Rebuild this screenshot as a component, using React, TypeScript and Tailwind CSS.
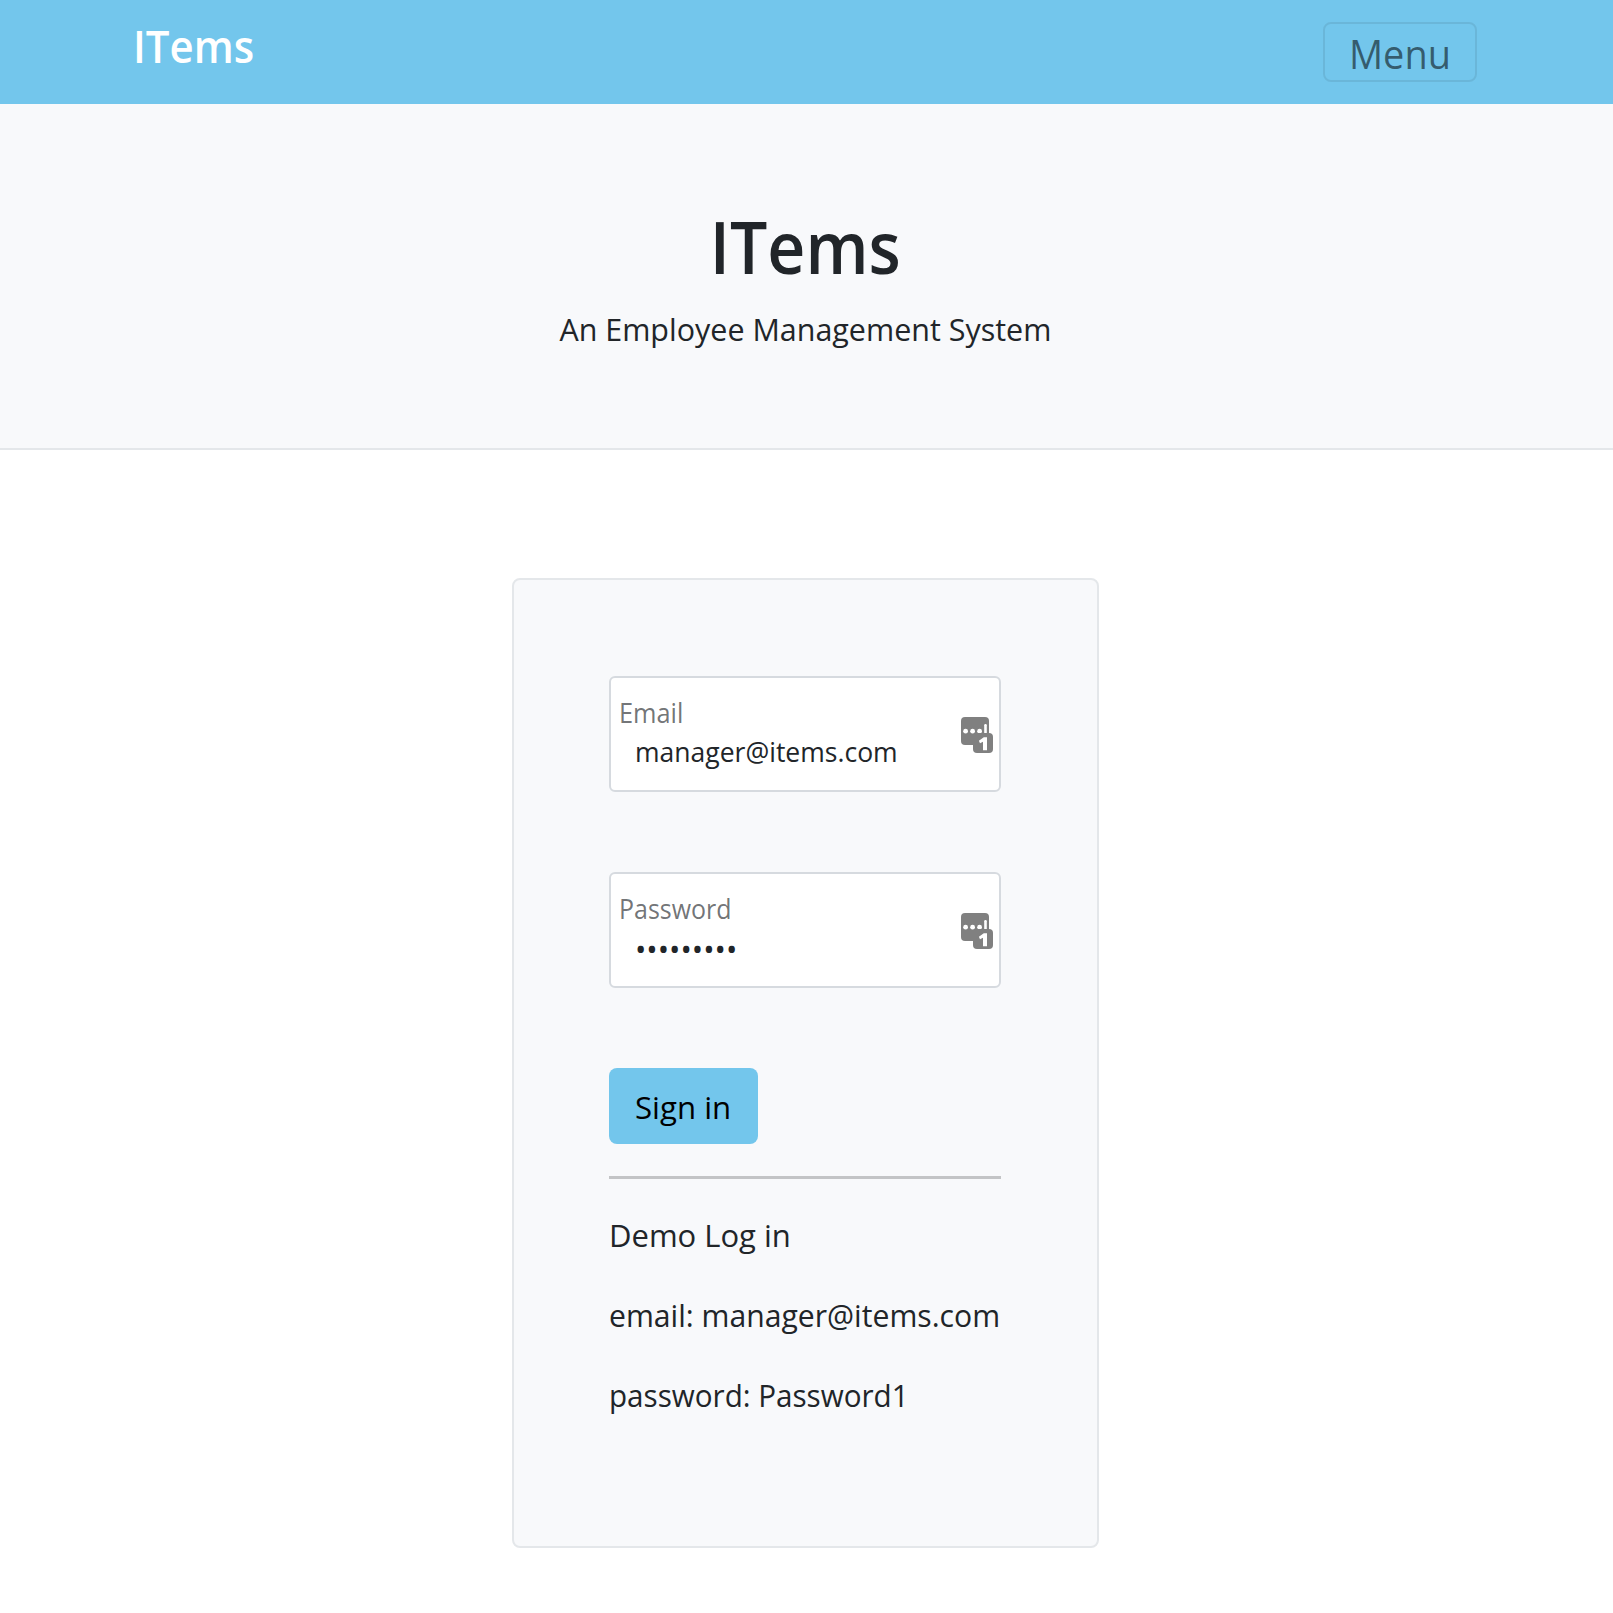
function VaultIcon() {
  return (
    <svg viewBox="0 0 32 36" className="absolute right-[6px] top-[39px] h-9 w-8" aria-hidden="true">
      <rect x="0" y="0" width="28" height="28" rx="4" fill="#808080" />
      <circle cx="4.6" cy="14.2" r="2.4" fill="#fff" />
      <circle cx="11.6" cy="14.2" r="2.4" fill="#fff" />
      <circle cx="18.6" cy="14.2" r="2.4" fill="#fff" />
      <rect x="23.2" y="7" width="2.6" height="12" rx="1.2" fill="#fff" />
      <rect x="12" y="16" width="20" height="20" rx="4" fill="#808080" />
      <path d="M22.8 20.2h3.2v13h-4v-8.4l-3 1.5-1.1-2.6z" fill="#fff" />
    </svg>
  );
}

export default function App() {
  return (
    <div className="min-h-[1613px] bg-white font-['Open_Sans',sans-serif] text-[31.5px] text-[#212529]">
      <nav className="flex h-[104px] items-start justify-between bg-[#73c6ec] pl-[133px] pr-[136px]">
        <a className="mt-4 origin-left scale-x-[0.932] text-[45px] font-semibold leading-[60px] text-white">ITems</a>
        <button className="mt-[22px] h-[60px] w-[154px] rounded-lg border-2 border-black/8 pl-[24px] pt-[2px] text-left text-[39.5px] leading-[57px] text-black/55">
          <span className="inline-block origin-left scale-x-[0.96]">Menu</span>
        </button>
      </nav>

      <header className="flex h-[346px] flex-col items-center border-b-2 border-[#e4e7ea] bg-[#f8f9fb] pt-[104px]">
        <h1 className="mr-[3px] h-[78px] scale-x-[0.925] text-[71.5px] font-semibold leading-[78px]">ITems</h1>
        <p className="mr-[2px] mt-[19px] scale-x-[0.967] leading-[48px]">An Employee Management System</p>
      </header>

      <main className="pl-[512px] pt-[128px]">
        <section className="h-[970px] w-[587px] rounded-lg border-2 border-[#e4e7ea] bg-[#f8f9fb] px-[95px] pt-24">
          <div className="relative h-[116px] w-[392px] rounded-md border-2 border-[#d6dadf] bg-white pl-[8px] pt-[15px]">
            <label className="block h-[40px] origin-left scale-x-[0.948] text-[26.7px] leading-[40px] text-[#212529]/65">Email</label>
            <input
              readOnly
              value="manager@items.com"
              className="-mt-px ml-4 block h-[38px] w-[310px] origin-left scale-x-[0.958] text-[27.7px] leading-[38px] outline-none"
            />
            <VaultIcon />
          </div>
          <div className="relative mt-20 h-[116px] w-[392px] rounded-md border-2 border-[#d6dadf] bg-white pl-[8px] pt-[15px]">
            <label className="block h-[40px] origin-left scale-x-[0.935] text-[26.7px] leading-[40px] text-[#212529]/65">Password</label>
            <input
              readOnly
              type="password"
              value="Password1"
              className="ml-4 block h-[40px] w-[290px] origin-left scale-x-[0.975] text-[31px] leading-[40px] outline-none"
            />
            <VaultIcon />
          </div>
          <button className="mt-20 block h-[76px] w-[149px] rounded-lg bg-[#73c6ec] pl-[26px] pt-[2px] text-left leading-[74px] text-black">
            <span className="inline-block origin-left scale-x-[0.99]">Sign in</span>
          </button>
          <hr className="mt-8 h-[2.5px] w-[392px] border-0 bg-[#c3c4c6]" />
          <div className="mt-[32.5px] flex flex-col gap-8 whitespace-nowrap leading-[48px]">
            <p className="origin-left scale-x-[0.984]">Demo Log in</p>
            <p className="origin-left scale-x-[0.957]">email: manager@items.com</p>
            <p className="origin-left scale-x-[0.94]">password: Password1</p>
          </div>
        </section>
      </main>
    </div>
  );
}
